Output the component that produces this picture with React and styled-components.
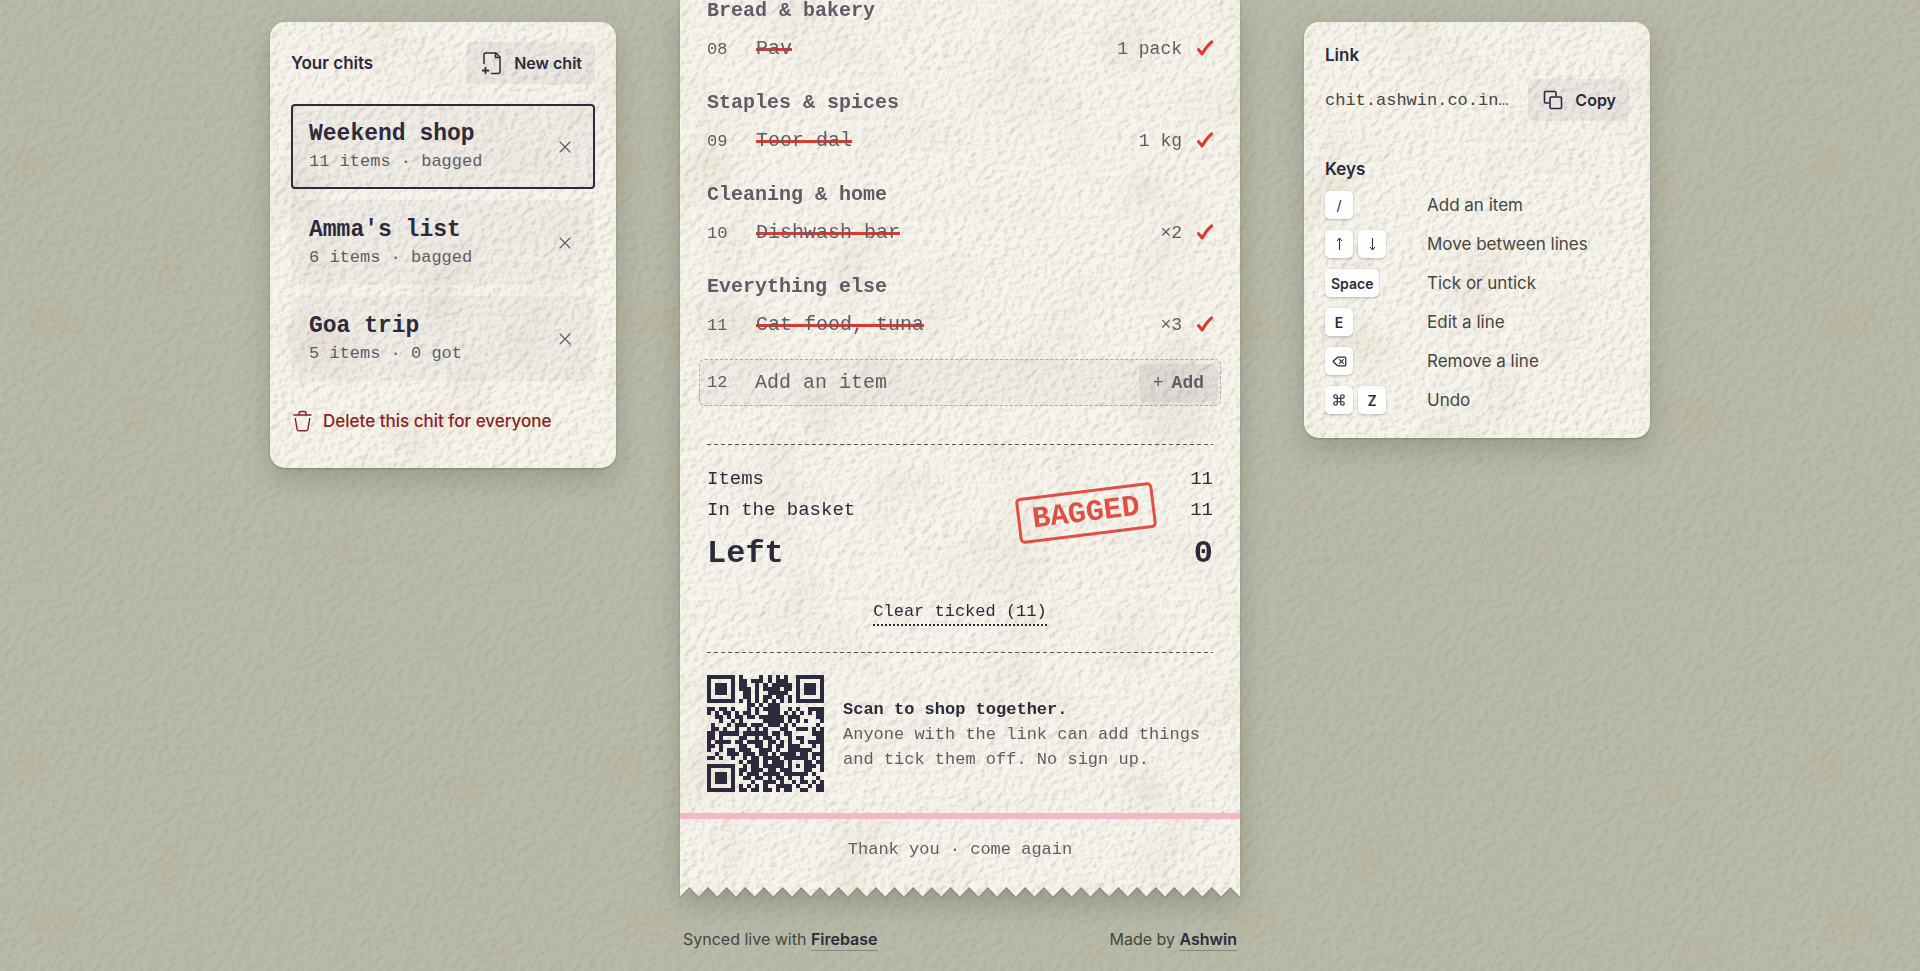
import { useState } from 'react'
import styled, { createGlobalStyle } from 'styled-components'
import { Command, Delete, X } from 'lucide-react'

const ink = '#2c2a3c'
const muted = '#5f5c67'
const red = '#dd3a2f'
const sans = `Inter, "Liberation Sans", sans-serif`
const mono = `"Liberation Mono", monospace`

// embossed paper grain, tiled
const grain = (scale, level) => {
    const svg = `<svg xmlns='http://www.w3.org/2000/svg' width='480' height='480'><filter id='g' x='0' y='0' width='100%' height='100%' color-interpolation-filters='sRGB'><feTurbulence type='fractalNoise' baseFrequency='.15 .16' numOctaves='2' seed='7' stitchTiles='stitch'/><feColorMatrix values='0 0 0 0 0 0 0 0 0 0 0 0 0 0 0 1 0 0 0 0'/><feDiffuseLighting surfaceScale='${scale}' diffuseConstant='${level}' lighting-color='white'><feDistantLight azimuth='215' elevation='60'/></feDiffuseLighting></filter><rect width='480' height='480' filter='url(#g)'/></svg>`
    return `url("data:image/svg+xml,${encodeURIComponent(svg).replace(/'/g, '%27')}")`
}

// wide, faint brown stains
const stains = `url("data:image/svg+xml,${encodeURIComponent(`<svg xmlns="http://www.w3.org/2000/svg" width="600" height="600"><filter id="s" x="0" y="0" width="100%" height="100%"><feTurbulence type="fractalNoise" baseFrequency=".014" numOctaves="3" seed="4" stitchTiles="stitch"/><feColorMatrix values="0 0 0 0 .5 0 0 0 0 .38 0 0 0 0 .22 0 .34 0 0 -.17"/></filter><rect width="600" height="600" filter="url(#s)"/></svg>`)}")`

const GlobalStyle = createGlobalStyle`
  * {
    box-sizing: border-box;
  }
  body {
    margin: 0;
    font-family: ${sans};
    font-size: 16px;
    color: ${ink};
    background-color: #b9bbaa;
    background-image: ${stains}, ${grain(0.3, 1.14)};
    background-blend-mode: normal, multiply;
  }
  button {
    font: inherit;
    color: inherit;
    border: 0;
    padding: 0;
    background: none;
    cursor: pointer;
  }
`

const Page = styled.main`
  display: grid;
  grid-template-columns: 1fr minmax(0, 560px) 1fr;
  gap: 64px;
  align-items: start;
  max-width: 1380px;
  min-height: 100vh;
  margin: 0 auto;
`

const paper = `
  background-color: #f7f4ec;
  background-image: ${stains}, ${grain(0.6, 1.14)};
  background-blend-mode: normal, multiply;
`

const Card = styled.section`
  ${paper}
  margin-top: 22px;
  padding: 20px 21px 24px;
  border-radius: 15px;
  box-shadow: 0 1px 2px rgba(60, 60, 40, 0.3), 0 12px 28px rgba(60, 60, 40, 0.22);
`

const CardHead = styled.header`
  display: flex;
  align-items: center;
  justify-content: space-between;
  margin-bottom: 20px;
`

const Heading = styled.h2`
  margin: 0;
  font-size: 17px;
  font-weight: 600;
  line-height: 26px;
`

const SoftButton = styled.button`
  display: flex;
  align-items: center;
  gap: 12px;
  height: 42px;
  padding: 0 13px 0 15px;
  border-radius: 6px;
  font-weight: 600;
  background: rgba(44, 42, 70, 0.06);
`

const ChitList = styled.ul`
  display: grid;
  gap: 11px;
  margin: 0;
  padding: 0;
  list-style: none;
`

const Chit = styled.li`
  display: flex;
  align-items: center;
  justify-content: space-between;
  height: 85px;
  padding: 0 18px 0 16px;
  border: 2px solid ${({ $current }) => ($current ? ink : 'transparent')};
  border-radius: 4px;
  background: rgba(44, 42, 70, 0.03);
  font-family: ${mono};
`

const ChitOpen = styled.button`
  display: grid;
  text-align: left;
`

const ChitName = styled.span`
  font-size: 23px;
  font-weight: 700;
  line-height: 30px;
`

const ChitNote = styled.span`
  font-size: 17px;
  line-height: 26px;
  color: ${muted};
`

const RemoveButton = styled.button`
  display: flex;
  color: ${muted};
`

const DeleteButton = styled.button`
  display: flex;
  align-items: center;
  gap: 11px;
  height: 42px;
  margin: 19px 0 2px;
  padding-left: 2px;
  font-size: 17px;
  font-weight: 500;
  color: #8a1f1c;
`

const Centre = styled.div`
  display: flex;
  flex-direction: column;
`

const ReceiptShadow = styled.div`
  filter: drop-shadow(0 1px 1px rgba(60, 60, 40, 0.25)) drop-shadow(0 12px 14px rgba(60, 60, 40, 0.25));
`

const Receipt = styled.article`
  ${paper}
  font-family: ${mono};
  mask: conic-gradient(from 135deg at 50% calc(100% - 9px), transparent 90deg, #000 0) 0 0 / calc(100% / 30) 100%;
`

const ReceiptBody = styled.div`
  padding: 1px 27px 21px;
`

const Group = styled.section`
  padding-bottom: 21px;
`

const GroupName = styled.h3`
  margin: 0 0 5px;
  font-size: 20px;
  font-weight: 700;
  line-height: 20px;
  color: ${muted};
`

const Line = styled.label`
  display: grid;
  grid-template-columns: 49px 1fr auto 16px;
  align-items: center;
  height: 46px;
  color: ${muted};
  cursor: pointer;
`

const Number = styled.span`
  font-size: 17px;
`

const ItemName = styled.span`
  justify-self: start;
  font-size: 20px;
  line-height: 28px;
  background: ${({ $ticked }) => ($ticked ? `linear-gradient(${red}, ${red}) 0 13px / 100% 3px no-repeat` : 'none')};
`

const Quantity = styled.span`
  padding-right: 15px;
  font-size: 18px;
`

const Tick = styled.span`
  display: grid;

  input,
  svg {
    grid-area: 1 / 1;
    width: 16px;
    height: 18px;
    margin: 0;
    pointer-events: none;
  }
  input {
    appearance: none;
  }
  input:not(:checked) + svg {
    opacity: 0;
  }
`

const AddForm = styled.form`
  display: grid;
  grid-template-columns: 48px 1fr auto;
  align-items: center;
  height: 47px;
  margin: -10px -8px 38px;
  padding: 0 2px 0 7px;
  border: 1px dashed #aaa7a4;
  border-radius: 6px;
  background: rgba(44, 42, 70, 0.03);
  color: ${muted};
`

const AddInput = styled.input`
  min-width: 0;
  padding: 0;
  border: 0;
  background: none;
  font: 20px/28px ${mono};
  color: ${ink};

  &::placeholder {
    color: ${muted};
    opacity: 1;
  }
`

const AddButton = styled.button`
  height: 38px;
  padding: 0 14px;
  border-radius: 6px;
  font-size: 18px;
  font-weight: 700;
  background: rgba(44, 42, 70, 0.07);

  span {
    font-weight: 400;
    margin-right: 8px;
  }
`

const Rule = styled.hr`
  height: 1px;
  margin: 0;
  border: 0;
  background: repeating-linear-gradient(90deg, #55535a 0 4px, transparent 4px 7px);
`

const Totals = styled.dl`
  position: relative;
  margin: 19px 0 0;
`

const Total = styled.div`
  display: flex;
  justify-content: space-between;
  font-size: ${({ $large }) => ($large ? '32px' : '19px')};
  font-weight: ${({ $large }) => ($large ? 700 : 400)};
  line-height: ${({ $large }) => ($large ? '56px' : '31px')};

  dd {
    margin: 0;
  }
`

const Stamp = styled.div`
  position: absolute;
  top: 26px;
  right: 58px;
  padding: 4px 12px;
  border: 3px solid ${red};
  border-radius: 5px;
  font-size: 30px;
  font-weight: 700;
  line-height: 32px;
  color: ${red};
  opacity: 0.88;
  transform: rotate(-7deg);
`

const ClearButton = styled.button`
  display: block;
  margin: 17px auto 26px;
  border-bottom: 2px dotted ${ink};
  font-size: 17px;
  line-height: 25px;
`

const Share = styled.div`
  display: flex;
  align-items: center;
  gap: 19px;
  padding-top: 22px;

  svg {
    flex: none;
  }
  p {
    margin: 0;
    padding-top: 2px;
    font-size: 17px;
    line-height: 25px;
    color: ${muted};
  }
  strong {
    display: block;
    color: ${ink};
  }
`

const Thanks = styled.p`
  margin: 0;
  padding: 17px 0 33px;
  border-top: 6px solid #f5b7c5;
  font-size: 17px;
  line-height: 27px;
  text-align: center;
  color: ${muted};
`

const Footer = styled.footer`
  display: flex;
  justify-content: space-between;
  padding: 32px 3px 20px;
  line-height: 22px;
  color: #45463f;

  a {
    display: inline-block;
    border-bottom: 1px solid #85867f;
    font-weight: 600;
    text-decoration: none;
    color: ${ink};
  }
`

const LinkRow = styled.div`
  display: flex;
  align-items: center;
  justify-content: space-between;
  gap: 12px;
  margin: 11px 0 35px;
`

const LinkText = styled.span`
  overflow: hidden;
  font-family: ${mono};
  font-size: 17px;
  white-space: nowrap;
  text-overflow: ellipsis;
  color: #45463f;
`

const Keys = styled.dl`
  display: grid;
  gap: 11px;
  margin: 9px 0 0;
`

const KeyRow = styled.div`
  display: grid;
  grid-template-columns: 102px 1fr;
  align-items: center;
  height: 28px;
  font-size: 17px;
  color: #45463f;

  dt {
    display: flex;
    gap: 5px;
  }
  dd {
    margin: 0;
  }
`

const Key = styled.kbd`
  display: flex;
  align-items: center;
  justify-content: center;
  min-width: 28px;
  height: 28px;
  padding: 0 6px;
  border-radius: 5px;
  background: #fdfdfc;
  box-shadow: 0 0 0 1px rgba(44, 42, 60, 0.06), 0 2px 2px rgba(44, 42, 60, 0.14);
  font-family: ${sans};
  font-size: 14px;
  font-weight: ${({ $light }) => ($light ? 400 : 600)};
  color: ${ink};
`

const groups = [
    { name: 'Bread & bakery', no: '08', item: 'Pav', qty: '1 pack' },
    { name: 'Staples & spices', no: '09', item: 'Toor dal', qty: '1 kg' },
    { name: 'Cleaning & home', no: '10', item: 'Dishwash bar', qty: '×2' },
    { name: 'Everything else', no: '11', item: 'Cat food, tuna', qty: '×3' },
]

const chits = [
    { name: 'Weekend shop', note: '11 items · bagged' },
    { name: "Amma's list", note: '6 items · bagged' },
    { name: 'Goa trip', note: '5 items · 0 got' },
]

const qrRows = [
    'XXXXXXX.X....X.X.X.X..XXXXXXX',
    'X.....X.XX.XXX.X.XXX..X.....X',
    'X.XXX.X.XX..X.X.XXXXX.X.XXX.X',
    'X.XXX.X.XXX.X.XXXX.XX.X.XXX.X',
    'X.XXX.X..XX.X..XXXXX..X.XXX.X',
    'X.....X..XX.X.XX.XX.X.X.....X',
    'XXXXXXX.X.X.X.X.X.X.X.XXXXXXX',
    '..........XX.X.XXX...........',
    'XX.XX.X...X.X.XXXX..X.X..XXXX',
    'X.X.XX.X.XX.X..XXX.X.X.X.X.XX',
    '..XX.X.XX.XX.XXXXXX.XXX....XX',
    '...X..X.X.....XXXXX.X.X.X...X',
    '.X...X.XXX.XXX.XXX.X.X.....X.',
    '.XX.X..X..X.X.X...XX..XXX.X.X',
    'XX.XXXXX.XXXXXX.XX.XX.....XXX',
    'XX.X....XX..X.XX.X..X.XX...XX',
    'X.XXXX.XX.XXXX.XX.X.X..X.XXXX',
    'XX.X....XX..XX.X.XX.XXX...X.X',
    'X..X.XX.XXX..XXX.X..XXXXXX..X',
    '..X..XXX.XXX.XX.X.XXXX.XX.XXX',
    'XX.X..X..X.XX.XXXX.XXXXXX.X.X',
    '........X.XXX.X.XXX.X...XX.XX',
    'XXXXXXX..X.XX.XXXXX.X.X.XXX.X',
    'X.....X.XX.XXX.XX.XXX...XX..X',
    'X.XXX.X.X.XXX.XXXX.XXXXXX.X..',
    'X.XXX.X..XX.XX.X.XX.X..X...X.',
    'X.XXX.X....X..XXX.X..X.XX.X.X',
    'X.....X.X.X.X.X..XXXX.X..X.XX',
    'XXXXXXX.XX.XX.XX.X.XX..XX..XX',
]

function QrCode() {
    return (
        <svg width="117" height="117" viewBox="0 0 29 29" shapeRendering="crispEdges" role="img" aria-label="QR code">
            {qrRows.map((row, y) =>
                [...row].map((cell, x) =>
                    cell === 'X' ? <rect key={`${x}-${y}`} x={x} y={y} width="1" height="1" fill={ink} /> : null
                )
            )}
        </svg>
    )
}

function NewChitIcon() {
    return (
        <svg width="21" height="24" viewBox="0 0 21 24" fill="none" stroke="currentColor" strokeWidth="1.5">
            <path d="M3 13V4a2 2 0 0 1 2-2h10l4 4v14.5a2 2 0 0 1-2 2H10M14.5 2v4.5H19" />
            <path d="M4.5 16v7M1 19.5h7" strokeWidth="1.8" />
        </svg>
    )
}

function BinIcon() {
    return (
        <svg width="19" height="22" viewBox="0 0 19 22" fill="none" stroke="currentColor" strokeWidth="1.4">
            <path d="M.5 5h18M6 5V3.5a2 2 0 0 1 2-2h3a2 2 0 0 1 2 2V5M2.2 8l1.8 11a2 2 0 0 0 2 1.7h7a2 2 0 0 0 2-1.7L16.8 8" />
        </svg>
    )
}

function CopyIcon() {
    return (
        <svg width="20" height="20" viewBox="0 0 20 20" fill="none" stroke="currentColor" strokeWidth="1.6">
            <path d="M6.5 13h-4a1 1 0 0 1-1-1V2.5a1 1 0 0 1 1-1H12a1 1 0 0 1 1 1v4" />
            <rect x="7" y="7" width="11.5" height="11.5" rx="1" />
        </svg>
    )
}

function ArrowIcon({ down }) {
    return (
        <svg width="9" height="16" viewBox="0 0 9 16" fill="none" stroke="currentColor" strokeWidth="1">
            <path d={down ? 'M4.5 2v12M2 11l2.5 3L7 11' : 'M4.5 14V2M2 5l2.5-3L7 5'} />
        </svg>
    )
}

const keys = [
    { caps: ['/'], does: 'Add an item' },
    { caps: [<ArrowIcon />, <ArrowIcon down />], does: 'Move between lines' },
    { caps: ['Space'], does: 'Tick or untick' },
    { caps: ['E'], does: 'Edit a line' },
    { caps: [<Delete size={15} />], does: 'Remove a line' },
    { caps: [<Command size={14} />, 'Z'], does: 'Undo' },
]

function Item({ no, item, qty }) {
    const [ticked, setTicked] = useState(true)
    return (
        <Line>
            <Number>{no}</Number>
            <ItemName $ticked={ticked}>{item}</ItemName>
            <Quantity>{qty}</Quantity>
            <Tick>
                <input type="checkbox" checked={ticked} onChange={() => setTicked(!ticked)} />
                <svg viewBox="0 0 16 18" fill="none" stroke={red} strokeWidth="3" strokeLinecap="round" strokeLinejoin="round">
                    <path d="M1.6 9.7l3.5 4.3Q9 6.5 14.6 1.8" />
                </svg>
            </Tick>
        </Line>
    )
}

export default function App() {
    return (
        <>
            <GlobalStyle />
            <Page>
                <Card>
                    <CardHead>
                        <Heading>Your chits</Heading>
                        <SoftButton type="button">
                            <NewChitIcon />
                            New chit
                        </SoftButton>
                    </CardHead>
                    <ChitList>
                        {chits.map((chit, i) => (
                            <Chit key={chit.name} $current={i === 0}>
                                <ChitOpen type="button">
                                    <ChitName>{chit.name}</ChitName>
                                    <ChitNote>{chit.note}</ChitNote>
                                </ChitOpen>
                                <RemoveButton type="button" aria-label={`Remove ${chit.name}`}>
                                    <X size={20} strokeWidth={1.5} />
                                </RemoveButton>
                            </Chit>
                        ))}
                    </ChitList>
                    <DeleteButton type="button">
                        <BinIcon />
                        Delete this chit for everyone
                    </DeleteButton>
                </Card>

                <Centre>
                    <ReceiptShadow>
                        <Receipt>
                            <ReceiptBody>
                                {groups.map((group) => (
                                    <Group key={group.no}>
                                        <GroupName>{group.name}</GroupName>
                                        <Item {...group} />
                                    </Group>
                                ))}
                                <AddForm onSubmit={(e) => e.preventDefault()}>
                                    <Number>12</Number>
                                    <AddInput aria-label="Add an item" placeholder="Add an item" />
                                    <AddButton type="submit">
                                        <span>+</span>Add
                                    </AddButton>
                                </AddForm>
                                <Rule />
                                <Totals>
                                    <Total>
                                        <dt>Items</dt>
                                        <dd>11</dd>
                                    </Total>
                                    <Total>
                                        <dt>In the basket</dt>
                                        <dd>11</dd>
                                    </Total>
                                    <Total $large>
                                        <dt>Left</dt>
                                        <dd>0</dd>
                                    </Total>
                                    <Stamp>BAGGED</Stamp>
                                </Totals>
                                <ClearButton type="button">Clear ticked (11)</ClearButton>
                                <Rule />
                                <Share>
                                    <QrCode />
                                    <p>
                                        <strong>Scan to shop together.</strong>
                                        Anyone with the link can add things and tick them off. No sign up.
                                    </p>
                                </Share>
                            </ReceiptBody>
                            <Thanks>Thank you · come again</Thanks>
                        </Receipt>
                    </ReceiptShadow>
                    <Footer>
                        <span>
                            Synced live with <a href="#firebase">Firebase</a>
                        </span>
                        <span>
                            Made by <a href="#ashwin">Ashwin</a>
                        </span>
                    </Footer>
                </Centre>

                <Card>
                    <Heading>Link</Heading>
                    <LinkRow>
                        <LinkText>chit.ashwin.co.in…</LinkText>
                        <SoftButton type="button">
                            <CopyIcon />
                            Copy
                        </SoftButton>
                    </LinkRow>
                    <Heading>Keys</Heading>
                    <Keys>
                        {keys.map(({ caps, does }) => (
                            <KeyRow key={does}>
                                <dt>
                                    {caps.map((cap, i) => (
                                        <Key key={i} $light={cap === '/'}>{cap}</Key>
                                    ))}
                                </dt>
                                <dd>{does}</dd>
                            </KeyRow>
                        ))}
                    </Keys>
                </Card>
            </Page>
        </>
    )
}
